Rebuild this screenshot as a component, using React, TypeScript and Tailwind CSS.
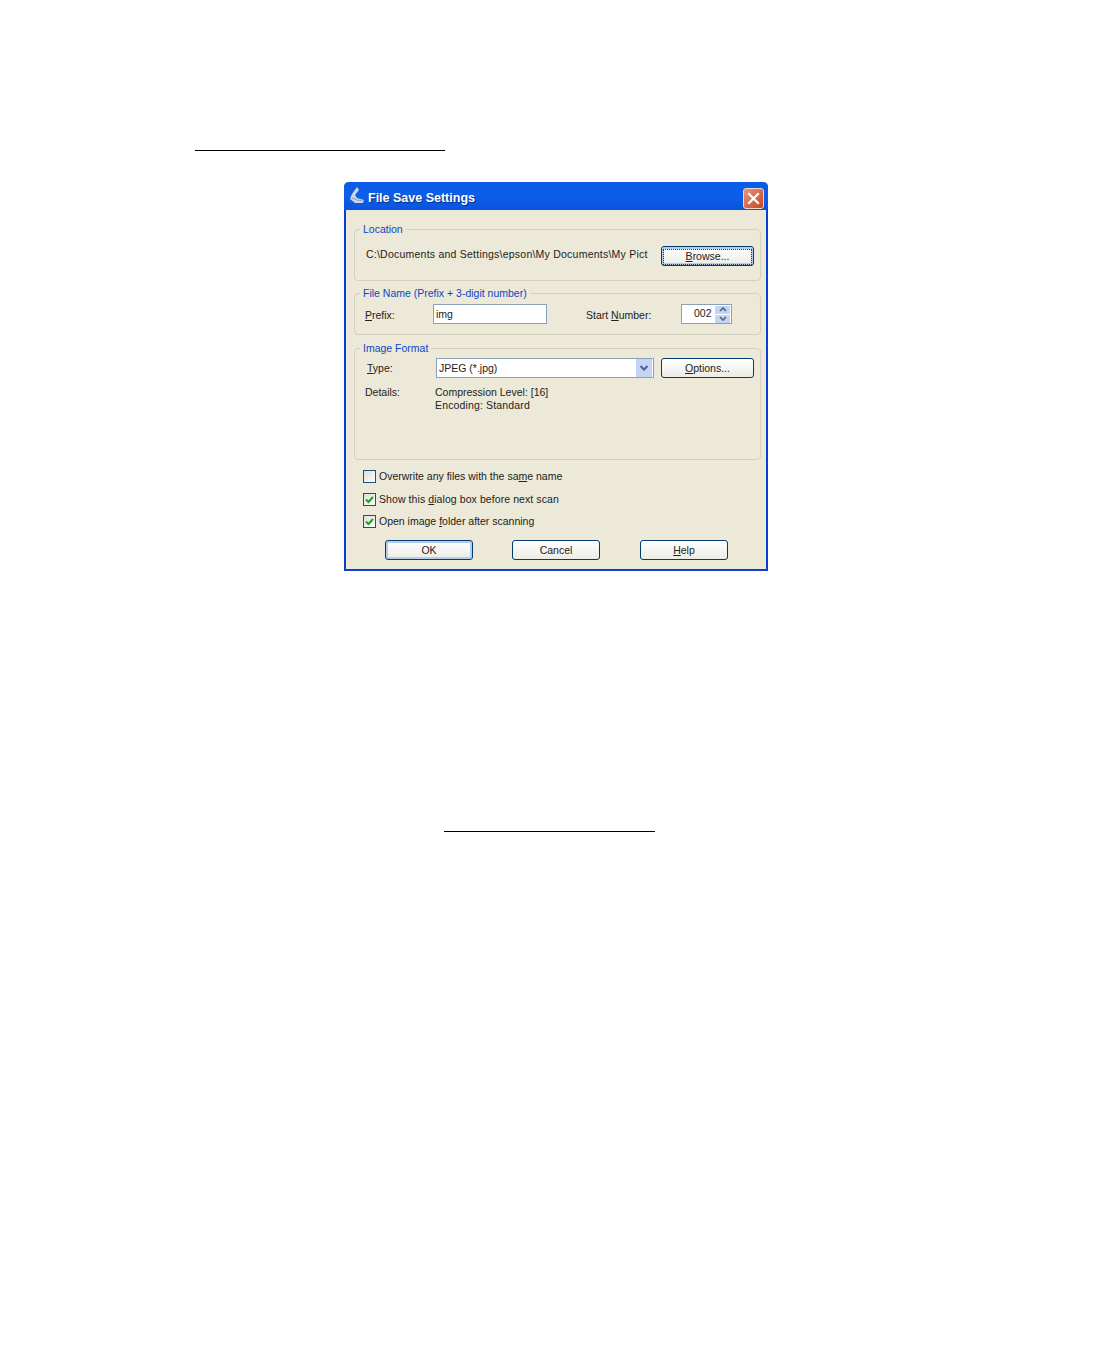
import type { ReactNode } from 'react';

function XpButton({ children, focused, wide }: { children: ReactNode; focused?: boolean; wide?: boolean }) {
  return (
    <button
      className={`flex h-[20px] items-center justify-center rounded-[3px] border border-[#003c74] bg-gradient-to-b from-white to-[#ecebe5] pt-px text-[10.5px] text-[#222] ${
        wide ? 'w-[93px]' : 'w-[88px]'
      } ${focused ? 'shadow-[inset_0_0_0_2px_#b5cdeb]' : ''}`}
    >
      {children}
    </button>
  );
}

function CheckRow({ checked, children }: { checked?: boolean; children: ReactNode }) {
  return (
    <div className="flex h-[13px] items-center gap-[3px]">
      <span className="flex h-[13px] w-[13px] items-center justify-center border border-[#1c5180] bg-gradient-to-br from-[#dcdcd7] to-white">
        {checked && (
          <svg width="11" height="11" viewBox="0 0 11 11">
            <path d="M2 5.5 L4.5 8 L9 3" fill="none" stroke="#21a121" strokeWidth="2" />
          </svg>
        )}
      </span>
      <span className="text-[10.5px] leading-[13px] text-[#222]">{children}</span>
    </div>
  );
}

function Group({ title, className, children }: { title: string; className: string; children: ReactNode }) {
  return (
    <fieldset className={`w-[407px] rounded-[4px] border border-[#d3d0bd] ${className}`}>
      <legend className="ml-[5px] px-[3px] text-[10.5px] leading-[14px] text-[#0a46c8]">{title}</legend>
      {children}
    </fieldset>
  );
}

export default function App() {
  return (
    <div className="h-[1372px] w-[1115px] overflow-hidden bg-white pt-[150px] font-['Liberation_Sans',sans-serif]">
      <div className="ml-[195px] h-px w-[250px] bg-black" />

      {/* Dialog */}
      <div className="ml-[344px] mt-[31px] flex h-[389px] w-[424px] flex-col rounded-t-[5px] border-x-[2px] border-b-[2px] border-[#0a3fd0] bg-[#ece9d8]">
        {/* Title bar */}
        <div className="-mx-[2px] flex h-[28px] items-center rounded-t-[5px] bg-gradient-to-b from-[#0a5ce6] via-[#0c5fe8] to-[#0a54dc] pl-[5px] pr-[4px] pt-[4px]">
          <svg width="16" height="20" viewBox="0 0 16 20" className="mr-[3px] -mt-[4px]">
            <path d="M8 1 L3 8 L1 13 L6 17 L14 17 L15 14 L8 12 L6 9 L10 4 Z" fill="#cdd6e8" />
            <path d="M3 12 L8 14 L14 15" fill="none" stroke="#8fa3c6" strokeWidth="1.2" />
          </svg>
          <span className="text-[12.5px] font-bold text-white [text-shadow:1px_1px_1px_#0a2f8c]">
            File Save Settings
          </span>
          <span className="ml-auto flex h-[21px] w-[21px] items-center justify-center rounded-[3px] border border-[#f3d6cc] bg-gradient-to-br from-[#e8937a] to-[#c8431f]">
            <svg width="13" height="13" viewBox="0 0 13 13">
              <path d="M2 2 L11 11 M11 2 L2 11" stroke="white" strokeWidth="2.2" strokeLinecap="square" />
            </svg>
          </span>
        </div>

        <div className="flex flex-1 flex-col pl-[8px] pt-[12px]">
          {/* Location */}
          <Group title="Location" className="h-[59px]">
            <div className="flex items-center justify-between pl-[11px] pr-[6px] pt-[10px]">
              <span className="-mt-[2px] text-[10.5px] tracking-[0.23px] text-[#222]">
                C:\Documents and Settings\epson\My Documents\My Pict
              </span>
              <XpButton focused wide>
                <span className="flex h-[16px] w-[89px] items-center justify-center border border-dotted border-[#333]">
                  <span>
                    <u>B</u>rowse...
                  </span>
                </span>
              </XpButton>
            </div>
          </Group>

          {/* File name */}
          <Group title="File Name (Prefix + 3-digit number)" className="mt-[5px] h-[49px]">
            <div className="flex items-center pl-[10px] pt-[4px] text-[10.5px] text-[#222]">
              <span className="mt-[3px] w-[68px]">
                <u>P</u>refix:
              </span>
              <div className="flex h-[20px] w-[114px] items-center border border-[#8aa1b8] bg-white pl-[2px] pt-px">img</div>
              <span className="ml-[39px] mt-[3px] w-[95px]">
                Start <u>N</u>umber:
              </span>
              <div className="flex h-[20px] w-[51px] items-center justify-between border border-[#8aa1b8] bg-white pl-[12px] pr-px">
                <span>002</span>
                <div className="flex w-[15px] flex-col gap-px">
                  <span className="flex h-[8px] items-center justify-center bg-[#c4d4f4]">
                    <svg width="8" height="5" viewBox="0 0 8 5">
                      <path d="M1 4 L4 1 L7 4" fill="none" stroke="#4d6185" strokeWidth="1.6" />
                    </svg>
                  </span>
                  <span className="flex h-[8px] items-center justify-center bg-[#c4d4f4]">
                    <svg width="8" height="5" viewBox="0 0 8 5">
                      <path d="M1 1 L4 4 L7 1" fill="none" stroke="#4d6185" strokeWidth="1.6" />
                    </svg>
                  </span>
                </div>
              </div>
            </div>
          </Group>

          {/* Image format */}
          <Group title="Image Format" className="mt-[6px] h-[119px]">
            <div className="flex items-center pl-[12px] pr-[6px] pt-[3px] text-[10.5px] text-[#222]">
              <span className="mt-[2px] w-[69px]">
                <u>T</u>ype:
              </span>
              <div className="flex h-[20px] w-[218px] items-center justify-between border border-[#8aa1b8] bg-white pl-[2px] pr-px">
                <span className="pt-px">JPEG (*.jpg)</span>
                <span className="flex h-[18px] w-[16px] items-center justify-center bg-[#c4d4f4]">
                  <svg width="10" height="8" viewBox="0 0 10 8">
                    <path d="M1.5 2 L5 5.5 L8.5 2" fill="none" stroke="#4d6185" strokeWidth="2" />
                  </svg>
                </span>
              </div>
              <div className="ml-[7px]">
                <XpButton wide>
                  <span>
                    <u>O</u>ptions...
                  </span>
                </XpButton>
              </div>
            </div>
            <div className="mt-[8px] flex pl-[10px] text-[10.5px] leading-[13px] text-[#222]">
              <span className="w-[70px]">Details:</span>
              <div>
                <div>Compression Level: [16]</div>
                <div className="tracking-[0.15px]">Encoding: Standard</div>
              </div>
            </div>
          </Group>

          {/* Options */}
          <div className="mt-[10px] flex flex-col gap-[9.5px] pl-[9px]">
            <CheckRow>
              Overwrite any files with the sa<u>m</u>e name
            </CheckRow>
            <CheckRow checked>
              <span className="tracking-[0.08px]">
                Show this <u>d</u>ialog box before next scan
              </span>
            </CheckRow>
            <CheckRow checked>
              Open image <u>f</u>older after scanning
            </CheckRow>
          </div>

          {/* Buttons */}
          <div className="mt-[12px] flex gap-[39px] pl-[31px]">
            <XpButton focused>OK</XpButton>
            <XpButton>Cancel</XpButton>
            <div className="ml-px">
              <XpButton>
                <span>
                  <u>H</u>elp
                </span>
              </XpButton>
            </div>
          </div>
        </div>
      </div>

      <div className="ml-[444px] mt-[260px] h-px w-[211px] bg-black" />
    </div>
  );
}
